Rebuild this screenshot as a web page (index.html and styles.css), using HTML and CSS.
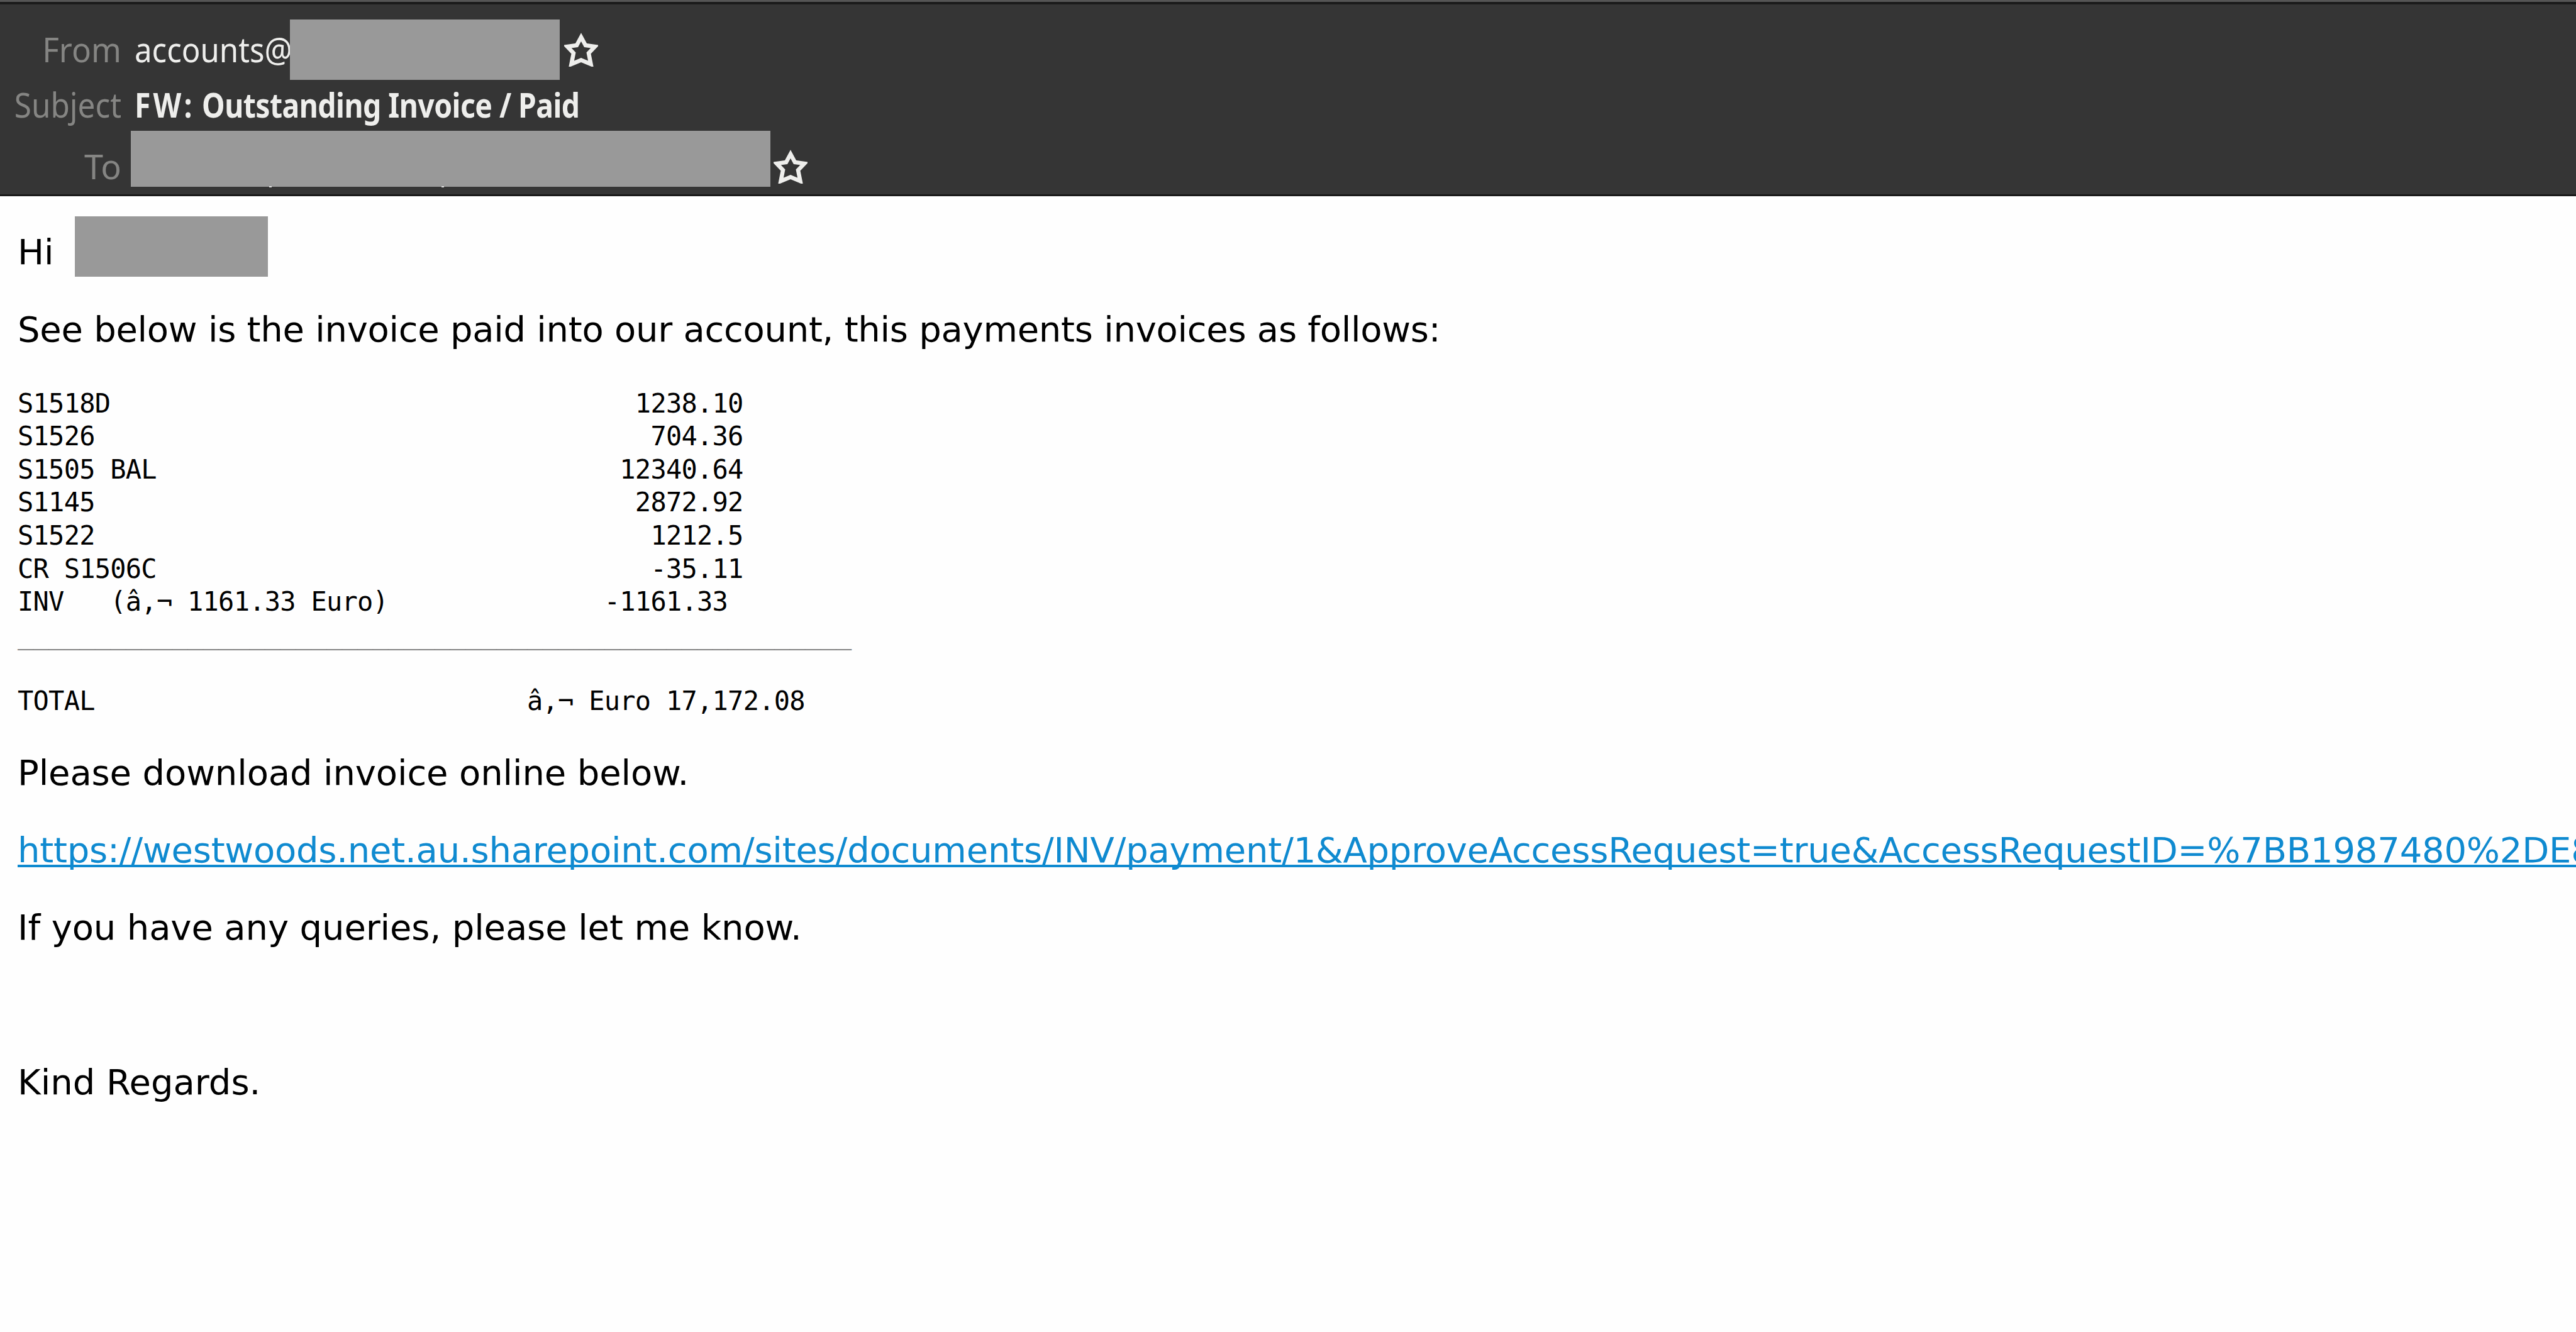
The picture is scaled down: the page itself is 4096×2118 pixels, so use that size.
FILE: index.html
```
<!DOCTYPE html>
<html lang="en">
  <head>
    <meta charset="UTF-8" />
    <meta name="viewport" content="width=device-width, initial-scale=1.0" />
    <title>FW: Outstanding Invoice / Paid</title>
    <link rel="stylesheet" href="styles.css">
  </head>
  <body>
    <div class="mail-header">
      <div class="row from">
        <span class="label">From</span>
        <span class="address">accounts@</span>
        <span class="redacted"></span>
        <svg class="star" viewBox="0 0 54 54">
          <path d="M27 7 L34 20 L49 22 L39 32.500 L42.500 50 L27 43.500 L11.500 50 L15 32.500 L5 22 L20 20 Z" />
        </svg>
      </div>
      <div class="row subject">
        <span class="label">Subject</span>
        <strong class="title"><span class="prefix">FW:</span> Outstanding Invoice / Paid</strong>
      </div>
      <div class="row to">
        <span class="label">To</span>
        <span class="redacted"></span>
        <svg class="star" viewBox="0 0 54 54">
          <path d="M27 7 L34 20 L49 22 L39 32.500 L42.500 50 L27 43.500 L11.500 50 L15 32.500 L5 22 L20 20 Z" />
        </svg>
      </div>
    </div>

    <div class="mail-body">
      <p class="greeting">Hi <span class="redacted"></span></p>
      <p class="intro">See below is the invoice paid into our account, this payments invoices as follows:</p>
<pre>
S1518D                                  1238.10
S1526                                    704.36
S1505 BAL                              12340.64
S1145                                   2872.92
S1522                                    1212.5
CR S1506C                                -35.11
INV   (â‚¬ 1161.33 Euro)              -1161.33
<span class="rule">______________________________________________________</span>

TOTAL                            â‚¬ Euro 17,172.08
</pre>
      <p class="note">Please download invoice online below.</p>
      <p class="link"><a href="#">https://westwoods.net.au.sharepoint.com/sites/documents/INV/payment/1&amp;ApproveAccessRequest=true&amp;AccessRequestID=%7BB1987480%2DE8</a></p>
      <p class="note">If you have any queries, please let me know.</p>
      <p>&nbsp;</p>
      <p>Kind Regards.</p>
    </div>
  </body>
</html>
```

FILE: styles.css
```
* {
  box-sizing: border-box;
}
body {
  margin: 0;
  background-color: #fefefe;
  overflow: hidden;
}

/* Message header */
.mail-header {
  height: 312px;
  border-top: 3px solid #555;
  border-bottom: 3px solid #1b1b1b;
  background-color: #353535;
  box-shadow: inset 0 4px 0 #1b1b1b;
  padding-top: 4px;
  font-family: "Noto Sans", sans-serif;
  font-size: 54px;
  line-height: 74px;
  color: #eeeeec;
}
.row {
  display: flex;
  align-items: flex-start;
  white-space: nowrap;
}
.label {
  width: 193px;
  text-align: right;
  color: #858583;
  transform-origin: right;
}
.redacted {
  flex: none;
  background-color: #999;
}
.star {
  width: 54px;
  height: 54px;
  fill: none;
  stroke: #eeeeec;
  stroke-width: 6.5;
}
.from {
  height: 121px;
}
.from .label,
.from .address {
  margin-top: 34px;
}
.from .label {
  transform: scaleX(0.95);
}
.address {
  width: 247px;
  margin-left: 21px;
  transform: scaleX(0.91);
  transform-origin: left;
}
.from .redacted {
  width: 429px;
  height: 96px;
  margin-top: 24px;
  position: relative;
}
.from .star {
  margin: 45px 0 0 7px;
}
.subject .label {
  transform: scaleX(0.915);
}
.subject .label,
.title {
  margin-top: 1px;
}
.title {
  margin-left: 21px;
  letter-spacing: -0.6px;
  transform: scaleX(0.857);
  transform-origin: left;
}
.prefix {
  letter-spacing: 4.8px;
}
.to .label {
  margin-top: 24px;
}
.to .redacted {
  position: relative;
  width: 1017px;
  height: 89px;
  margin: 5px 0 0 15px;
}
/* descender tips showing under the block */
.to .redacted::before,
.to .redacted::after {
  content: "";
  position: absolute;
  top: 88px;
  left: 220px;
  width: 4px;
  height: 2px;
  background-color: #ddd;
}
.to .redacted::after {
  left: 494px;
}
.to .star {
  margin: 35px 0 0 5px;
}

/* Message text */
.mail-body {
  padding: 56px 0 0 28px;
  font-family: "DejaVu Sans", sans-serif;
  font-size: 56px;
  line-height: 66.77px;
  color: #000;
  white-space: nowrap;
}
p {
  margin: 0 0 56px;
}
.greeting {
  display: flex;
}
.greeting .redacted {
  width: 307px;
  height: 96px;
  margin: -24px 0 -5.23px 33px;
}
.intro {
  letter-spacing: -0.28px;
}
.note {
  letter-spacing: -0.13px;
}
.link {
  letter-spacing: -0.23px;
}
pre {
  margin: 58px 0 55px;
  font-family: "DejaVu Sans Mono", monospace;
  font-size: 42px;
  line-height: 52.6px;
  letter-spacing: -0.74px;
}
.rule {
  color: #777;
}
a {
  color: #0f8ad0;
  text-decoration: underline;
  text-decoration-thickness: 4px;
  text-decoration-skip-ink: none;
  text-underline-offset: 3.5px;
}
```
